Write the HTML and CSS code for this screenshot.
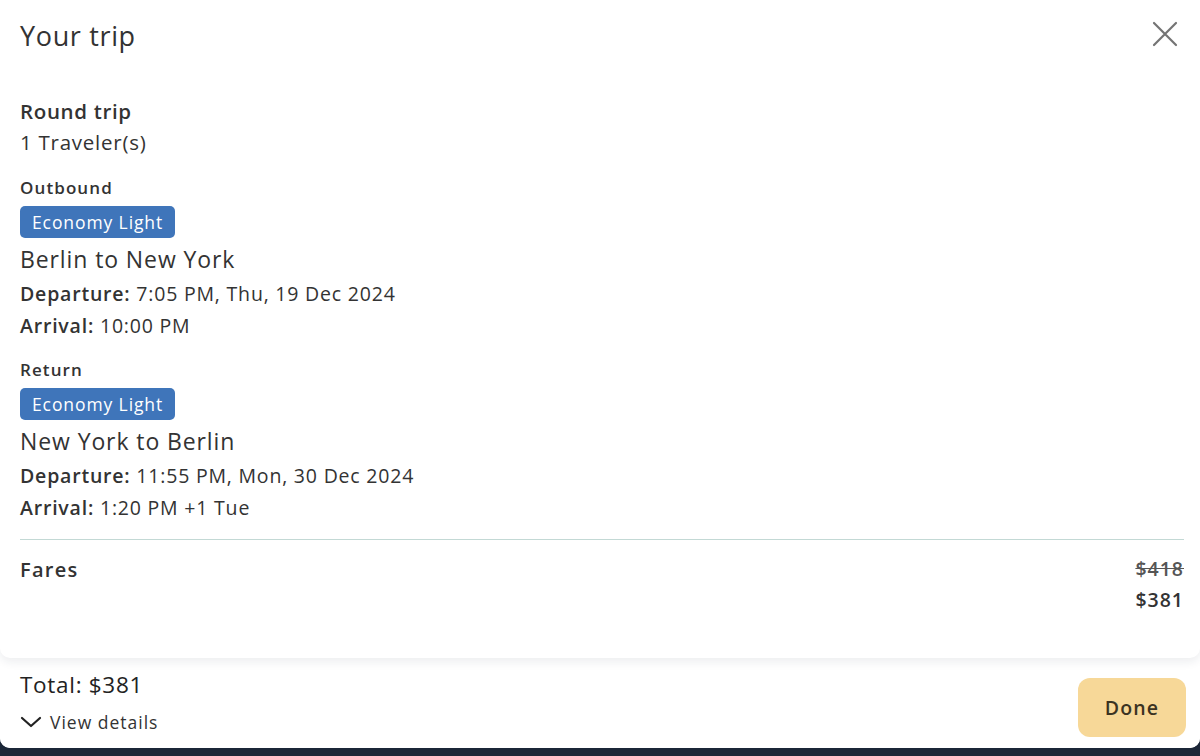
FILE: index.html
```html
<!DOCTYPE html>
<html lang="en">
<head>
<meta charset="utf-8">
<title>Your trip</title>
<link rel="stylesheet" href="styles.css">
</head>
<body>
<div class="sheet">
  <div class="card">
    <header class="card-head">
      <h1 class="title">Your trip</h1>
      <button class="close" aria-label="Close">
        <svg width="26" height="26" viewBox="0 0 26 26"><path d="M2 2 L24 24 M24 2 L2 24" stroke="#747474" stroke-width="2.2" stroke-linecap="round"/></svg>
      </button>
    </header>

    <section class="summary">
      <div class="trip-type">Round trip</div>
      <div class="travelers">1 Traveler(s)</div>
    </section>

    <section class="leg">
      <div class="leg-label">Outbound</div>
      <span class="badge">Economy Light</span>
      <div class="route">Berlin to New York</div>
      <div class="line"><span class="key">Departure:</span> 7:05 PM, Thu, 19 Dec 2024</div>
      <div class="line"><span class="key">Arrival:</span> 10:00 PM</div>
    </section>

    <section class="leg">
      <div class="leg-label">Return</div>
      <span class="badge">Economy Light</span>
      <div class="route">New York to Berlin</div>
      <div class="line"><span class="key">Departure:</span> 11:55 PM, Mon, 30 Dec 2024</div>
      <div class="line"><span class="key">Arrival:</span> 1:20 PM +1 Tue</div>
    </section>

    <div class="fares">
      <div class="fares-label">Fares</div>
      <div class="prices">
        <div class="old">$418</div>
        <div class="new">$381</div>
      </div>
    </div>
  </div>

  <footer class="bar">
    <div class="totals">
      <div class="total">Total: $381</div>
      <button class="details">
        <svg width="22" height="14" viewBox="0 0 22 14"><path d="M2 3 L11 11 L20 3" fill="none" stroke="#222" stroke-width="2.2" stroke-linecap="round" stroke-linejoin="round"/></svg>
        <span>View details</span>
      </button>
    </div>
    <button class="done">Done</button>
  </footer>
</div>
</body>
</html>
```

FILE: styles.css
```css
* { box-sizing: border-box; }
html, body { margin: 0; padding: 0; }
body {
  width: 1200px;
  height: 756px;
  overflow: hidden;
  background: #1b2638;
  font-family: "Open Sans", "Noto Sans", sans-serif;
  color: #3a3a3a;
}
.sheet {
  height: 748px;
  display: flex;
  flex-direction: column;
  background: #ffffff;
  border-radius: 0 0 10px 10px;
}
.card {
  height: 658px;
  flex: none;
  padding: 16px 16px 0 20px;
  background: #fff;
  border-radius: 0 0 10px 10px;
  box-shadow: 0 4px 10px rgba(30, 40, 70, 0.08);
  position: relative;
  z-index: 1;
}
.card-head {
  display: flex;
  justify-content: space-between;
  align-items: flex-start;
}
.title {
  margin: 0;
  font-size: 27px;
  font-weight: 400;
  line-height: 40px;
  letter-spacing: 0.65px;
  color: #333;
}
.close {
  border: 0;
  background: none;
  padding: 0;
  margin: 5px 6px 0 0;
  width: 26px;
  height: 26px;
  cursor: pointer;
}
.summary { margin-top: 40px; }
.trip-type { font-size: 20.5px; font-weight: 600; line-height: 30px; letter-spacing: 0.65px; color: #333; }
.travelers { font-size: 20.5px; line-height: 32px; letter-spacing: 0.75px; color: #333; }
.leg { margin-top: 18px; }
.leg + .leg { margin-top: 16px; }
.leg-label { font-size: 17px; font-weight: 600; line-height: 24px; letter-spacing: 1.1px; color: #333; }
.badge {
  display: inline-block;
  margin-top: 6px;
  background: #3f75ba;
  color: #fff;
  font-size: 17.5px;
  line-height: 32px;
  letter-spacing: 0.9px;
  padding: 0 12px;
  border-radius: 5px;
}
.route { font-size: 23px; line-height: 38px; letter-spacing: 0.9px; color: #333; margin-top: 2px; }
.line { font-size: 19.5px; line-height: 32px; letter-spacing: 0.8px; color: #333; }
.key { font-weight: 600; }
.fares {
  margin-top: 15px;
  border-top: 1.5px solid #c3d9d5;
  padding-top: 14px;
  display: flex;
  justify-content: space-between;
}
.fares-label { font-size: 20px; font-weight: 600; color: #333; line-height: 32px; letter-spacing: 1.3px; }
.prices { text-align: right; }
.old { font-size: 19.5px; font-weight: 600; color: #555; text-decoration: line-through; line-height: 30px; letter-spacing: 1px; }
.new { font-size: 19.5px; font-weight: 600; color: #333; line-height: 32px; letter-spacing: 1px; }
.bar {
  flex: 1;
  display: flex;
  justify-content: space-between;
  align-items: flex-start;
  padding: 12px 14px 0 20px;
  background: #fff;
  border-radius: 0 0 10px 10px;
}
.total { font-size: 22.5px; line-height: 30px; letter-spacing: 0.7px; color: #222; }
.details {
  border: 0;
  background: none;
  padding: 0;
  margin-top: 9px;
  display: flex;
  align-items: center;
  gap: 8px;
  font: inherit;
  font-size: 17.5px;
  letter-spacing: 1px;
  color: #333;
  line-height: 26px;
}
.done {
  border: 0;
  width: 108px;
  height: 59px;
  border-radius: 12px;
  background: #f7d898;
  color: #3b3322;
  font: inherit;
  font-size: 19.5px;
  font-weight: 600;
  letter-spacing: 1.2px;
  margin-top: 8px;
}
```
